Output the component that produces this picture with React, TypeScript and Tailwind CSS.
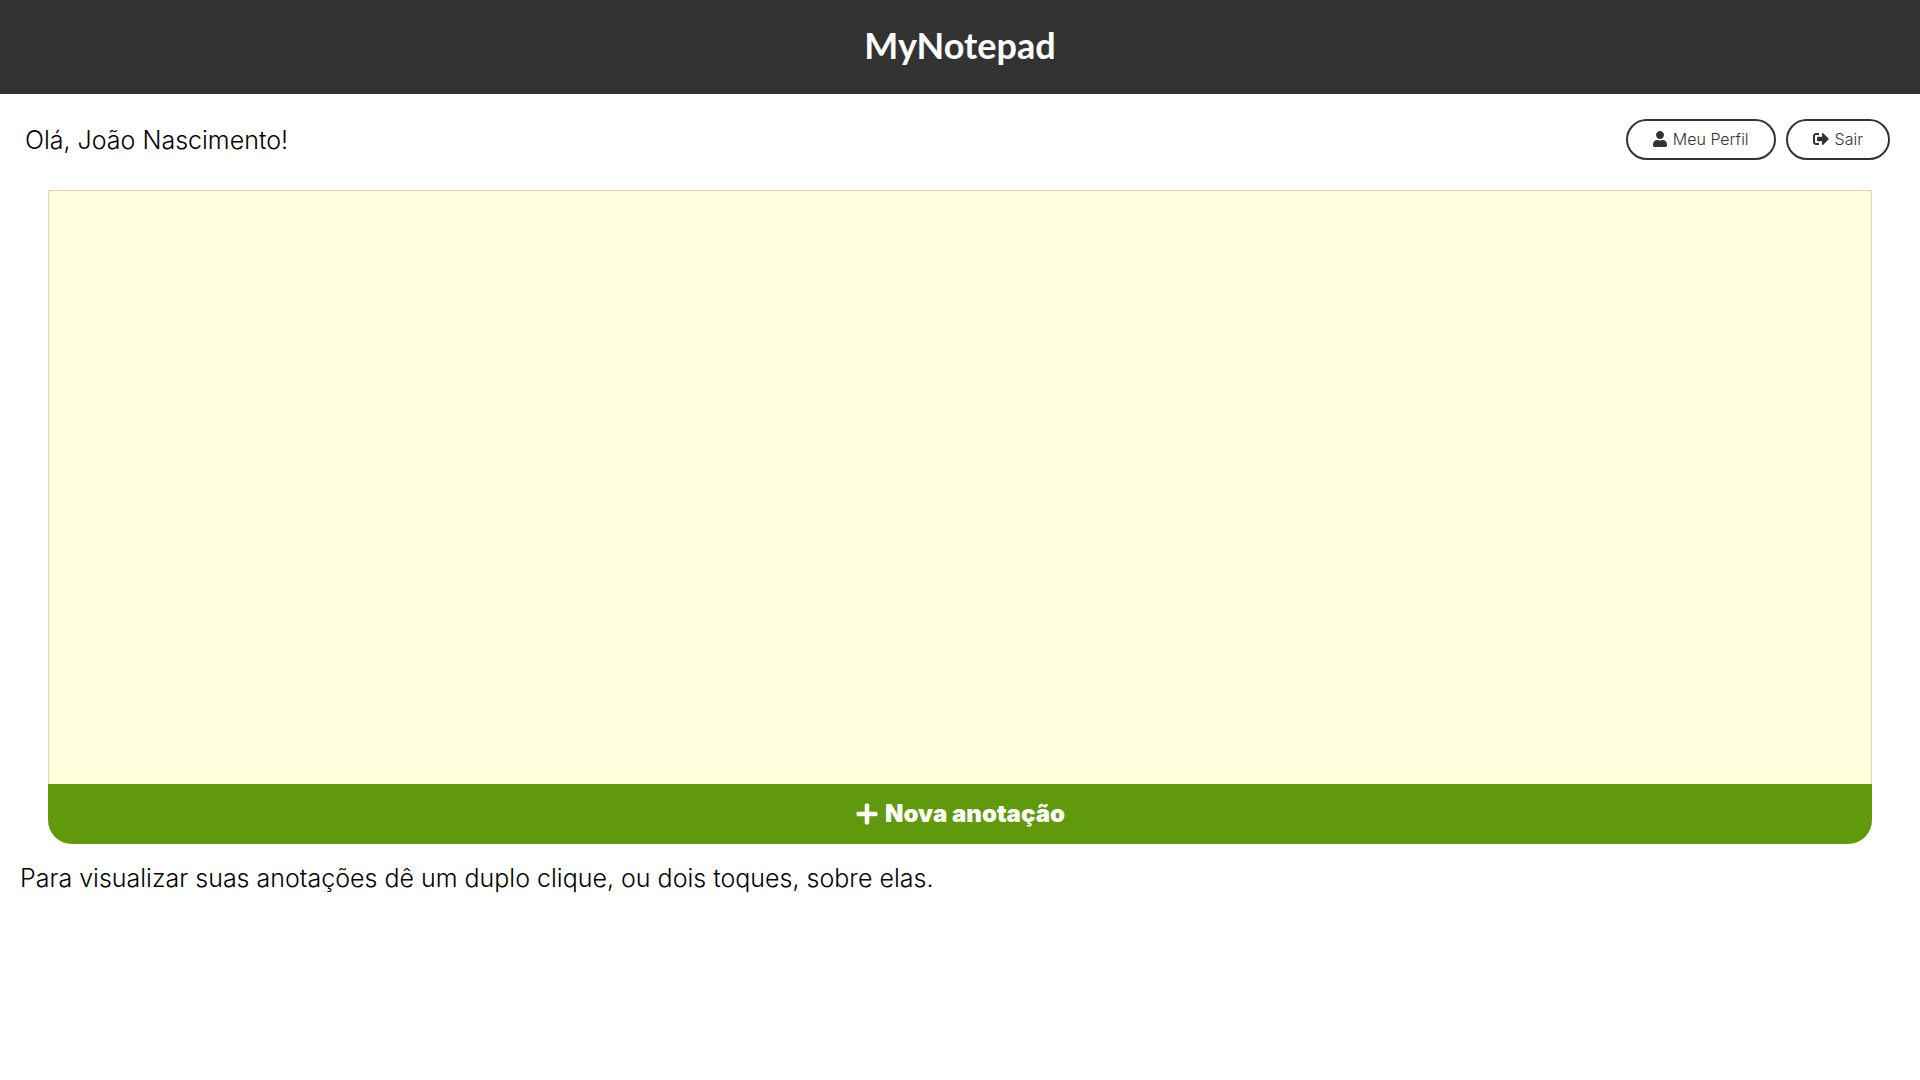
import { FaPlus, FaSignOutAlt, FaUser } from "react-icons/fa";

const pill =
  "flex h-[41px] cursor-pointer items-center justify-center gap-1.5 rounded-full border-2 border-[#333333] bg-white px-[25px] text-base font-light text-[#333333]";

export default function App() {
  return (
    <div className="min-h-screen bg-white font-['Inter',sans-serif] text-black">
      <header className="flex h-[94px] items-center justify-center bg-[#333333] pb-1">
        <h1 className="font-['Lato',sans-serif] text-[36px] leading-none font-bold text-white">MyNotepad</h1>
      </header>

      <div className="flex h-24 items-center justify-between pr-[30px] pb-1 pl-[25px]">
        <p className="text-[25px] leading-8 font-light">Olá, João Nascimento!</p>
        <nav className="flex gap-[10px] pb-0.5">
          <button type="button" className={pill}>
            <FaUser className="h-4 w-[14px]" />
            Meu Perfil
          </button>
          <button type="button" className={pill}>
            <FaSignOutAlt className="h-4 w-4" />
            Sair
          </button>
        </nav>
      </div>

      <main className="mx-12">
        <section aria-label="Anotações" className="h-[55vh] border border-b-0 border-[#eccbb0] bg-[#ffffdd]" />
        <button
          type="button"
          className="flex h-[60px] w-full cursor-pointer items-center justify-center gap-1.5 rounded-b-3xl bg-[#60990b] text-2xl font-black text-white"
        >
          <FaPlus size={24} />
          Nova anotação
        </button>
      </main>

      <p className="mt-[18px] px-5 text-[25px] leading-8 font-light">
        Para visualizar suas anotações dê um duplo clique, ou dois toques, sobre elas.
      </p>
    </div>
  );
}
